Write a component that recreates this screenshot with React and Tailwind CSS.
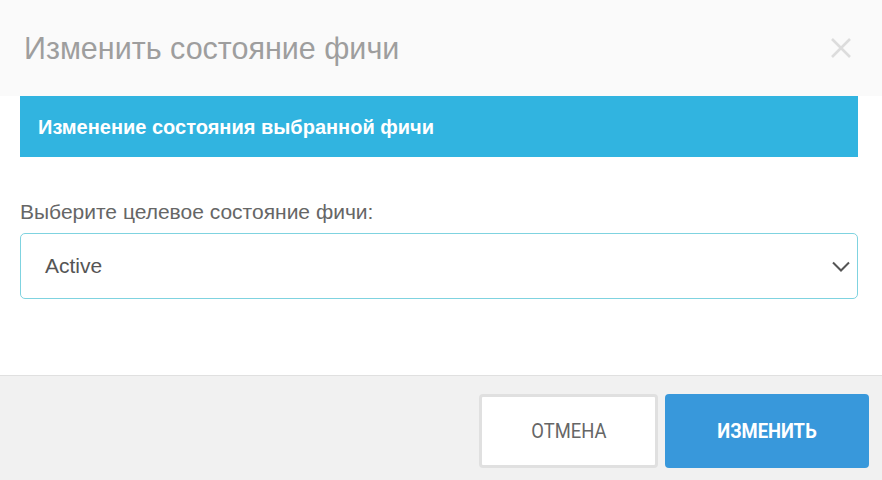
const ChevronDown = () => (
    <svg width="18" height="11" viewBox="0 0 18 11" fill="none" stroke="#555" strokeWidth="2">
        <path d="M1 1.5 L9 9.5 L17 1.5"/>
    </svg>
)

const CloseIcon = () => (
    <svg width="20" height="20" viewBox="0 0 20 20" stroke="#dcdcdc" strokeWidth="2.6">
        <path d="M1 1 L19 19 M19 1 L1 19"/>
    </svg>
)

const App = () => {
    return (
        <div className="w-[882px] h-[480px] bg-white flex flex-col font-['Liberation_Sans',Arial,sans-serif]">
            <div className="h-[96px] bg-[#fafafa] flex items-center justify-between pl-6 pr-[31px]">
                <h2 className="text-[30.5px] text-[#9e9e9e] leading-none">Изменить состояние фичи</h2>
                <button className="flex items-center justify-center"><CloseIcon/></button>
            </div>

            <div className="pl-5 pr-6 flex-1">
                <div className="h-[61px] bg-[#31b4e0] flex items-center px-[18px]">
                    <p className="text-white text-[20px] font-bold">Изменение состояния выбранной фичи</p>
                </div>

                <label className="block mt-[44px] text-[21px] text-[#666] leading-none">Выберите целевое состояние фичи:</label>
                <div className="mt-[11px] h-[66px] border border-[#7fd3e0] rounded-[5px] flex items-center justify-between pl-6 pr-[7px]">
                    <span className="text-[21px] text-[#555]">Active</span>
                    <ChevronDown/>
                </div>
            </div>

            <div className="h-[105px] border-t border-[#e0e0e0] bg-[#f1f1f1] flex items-start justify-end gap-[7px] pt-[18px] pr-[13px]">
                <button className="w-[179px] h-[74px] bg-white border-[3px] border-[#e0e0e0] rounded-[4px] text-[20px] text-[#666] font-['Roboto',sans-serif]">
                    <span className="inline-block scale-x-[0.92]">ОТМЕНА</span>
                </button>
                <button className="w-[204px] h-[74px] bg-[#3898db] rounded-[4px] text-[20px] text-white font-bold font-['Roboto',sans-serif]">
                    <span className="inline-block scale-x-[0.92]">ИЗМЕНИТЬ</span>
                </button>
            </div>
        </div>
    )
}

export default App
